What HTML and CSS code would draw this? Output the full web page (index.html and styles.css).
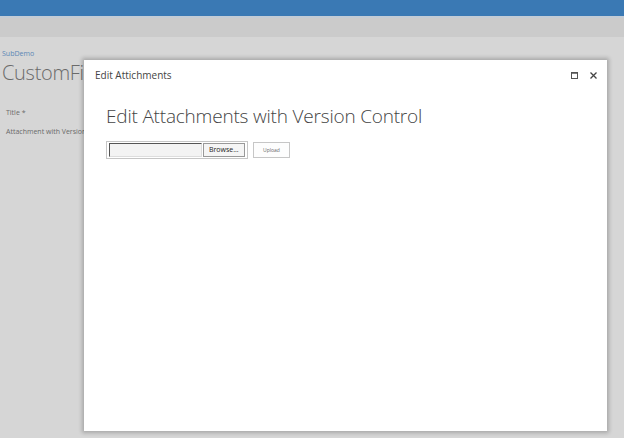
FILE: index.html
```
<!DOCTYPE html>
<html lang="en">
<head>
    <meta charset="UTF-8">
    <title>Edit Attachments</title>
    <link rel="stylesheet" href="styles.css">
</head>
<body>
    <div class="suite-bar"></div>
    <div class="ribbon"></div>
    <div class="page">
        <a class="crumb" href="#">SubDemo</a>
        <div class="page-title">CustomFields</div>
        <div class="field-label first">Title *</div>
        <div class="field-label">Attachment with Version</div>
    </div>
    <div class="dialog">
        <div class="dialog-head">
            <span class="dialog-title">Edit Attichments</span>
            <div class="dialog-tools">
                <svg width="9" height="9" viewBox="0 0 9 9"><rect x="1.5" y="1.5" width="6" height="6" fill="none" stroke="#555"/><line x1="1" y1="2" x2="8" y2="2" stroke="#555" stroke-width="1.5"/></svg>
                <svg width="9" height="9" viewBox="0 0 9 9"><path d="M1.5 1.5 L7.5 7.5 M7.5 1.5 L1.5 7.5" stroke="#444" stroke-width="1.3"/></svg>
            </div>
        </div>
        <div class="dialog-body">
            <h1>Edit Attachments with Version Control</h1>
            <div class="upload-row">
                <div class="file-box">
                    <span class="file-text"></span>
                    <span class="browse">Browse...</span>
                </div>
                <button class="upload">Upload</button>
            </div>
        </div>
    </div>
</body>
</html>
```

FILE: styles.css
```
body {
    margin: 0;
    font-family: "Open Sans", "Liberation Sans", sans-serif;
    background-color: #d6d6d6;
    height: 438px;
    overflow: hidden;
    position: relative;
}

.suite-bar {
    height: 16px;
    background-color: #3a79b4;
}

.ribbon {
    height: 21px;
    background-color: #cbcbcb;
    border-top: 2px solid #c3ccd6;
    box-sizing: border-box;
}

.page {
    padding: 12px 0 0 2px;
    white-space: nowrap;
}

.crumb {
    display: block;
    font-size: 7px;
    color: #5a86b5;
    text-decoration: none;
}

.page-title {
    font-size: 20px;
    font-weight: 300;
    color: #6a6a6a;
    line-height: 30px;
    letter-spacing: -0.3px;
}

.field-label {
    font-size: 7px;
    color: #6a6a6a;
    padding-left: 4px;
    margin-top: 10px;
}

.field-label.first {
    margin-top: 20px;
}

/* modal window sits over the page */
.dialog {
    position: absolute;
    left: 84px;
    top: 60px;
    width: 523px;
    height: 371px;
    background-color: #fff;
    box-shadow: 0 0 4px 2px rgba(0, 0, 0, 0.22);
}

.dialog-head {
    display: flex;
    justify-content: space-between;
    align-items: center;
    padding: 8px 9px 0 11px;
}

.dialog-title {
    font-size: 10px;
    color: #444;
}

.dialog-tools {
    display: flex;
    gap: 10px;
}

.dialog-body {
    padding: 0 0 0 22px;
}

h1 {
    font-size: 19px;
    font-weight: 300;
    color: #444;
    margin: 21px 0 12px;
    letter-spacing: -0.2px;
}

.upload-row {
    display: flex;
    gap: 5px;
    align-items: center;
}

.file-box {
    width: 142px;
    height: 18px;
    box-sizing: border-box;
    border: 1px solid #c6c6c6;
    display: flex;
    align-items: center;
    padding: 0 2px;
    gap: 1px;
}

.file-text {
    width: 92px;
    height: 12px;
    border: 1px solid #555;
    border-right-color: #ddd;
    border-bottom-color: #ddd;
    background-color: #f3f3f3;
}

.browse {
    width: 41px;
    height: 12px;
    border: 1px solid #999;
    background-color: #f5f5f5;
    font-size: 7px;
    color: #222;
    text-align: center;
    line-height: 12px;
}

.upload {
    width: 37px;
    height: 16px;
    border: 1px solid #c6c6c6;
    background-color: #fdfdfd;
    font-family: "Open Sans", "Liberation Sans", sans-serif;
    font-size: 5px;
    color: #666;
    padding: 0;
}
```
